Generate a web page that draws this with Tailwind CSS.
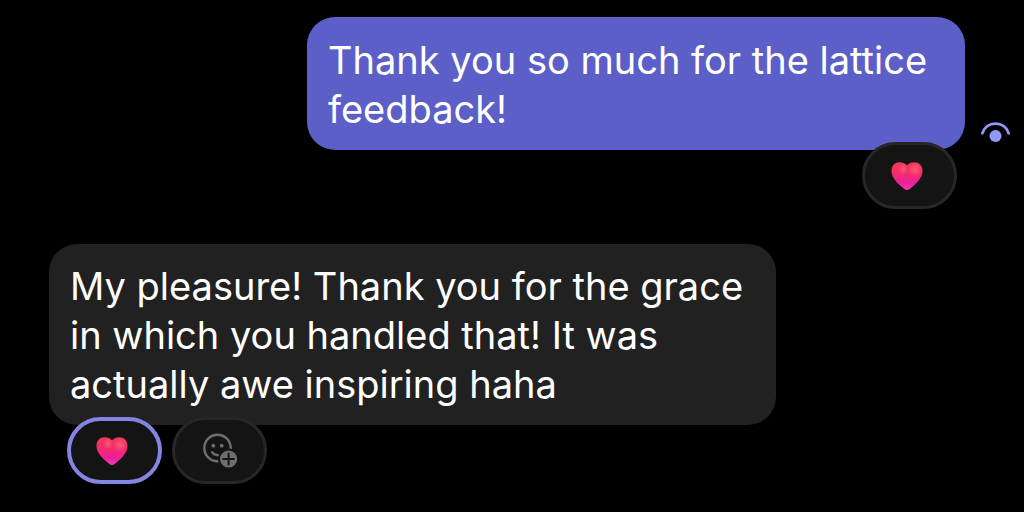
<!DOCTYPE html>
<html lang="en">
<head>
    <meta charset="UTF-8">
    <meta name="viewport" content="width=device-width, initial-scale=1.0">
    <title>Chat</title>
    <script src="https://cdn.jsdelivr.net/npm/@tailwindcss/browser@4"></script>
</head>
<body class="bg-black min-h-screen font-['Inter',sans-serif] text-white text-[38px] leading-[49px]">
    <svg class="absolute size-0" aria-hidden="true">
        <defs>
            <linearGradient id="heart-base" x1="0" y1="0" x2="0" y2="1">
                <stop offset="0" stop-color="#f23a58"></stop>
                <stop offset="0.4" stop-color="#f52c6c"></stop>
                <stop offset="0.75" stop-color="#ea1f9c"></stop>
                <stop offset="1" stop-color="#ee3fae"></stop>
            </linearGradient>
            <radialGradient id="heart-shine" cx="0.5" cy="0.5" r="0.5">
                <stop offset="0" stop-color="#ff8a84" stop-opacity="0.5"></stop>
                <stop offset="1" stop-color="#ff7a80" stop-opacity="0"></stop>
            </radialGradient>
            <symbol id="heart" viewBox="0 0 32 28">
                <path fill="url(#heart-base)" d="M16 3.6C14 1.2 11.6 .2 8.8 .2C4 .2 .5 3.6 .5 8.8C.5 16.4 7.4 22.2 13.6 27.2C15.2 28.3 16.8 28.3 18.4 27.2C24.6 22.2 31.5 16.4 31.5 8.8C31.5 3.6 28 .2 23.2 .2C20.4 .2 18 1.2 16 3.6Z"></path>
                <ellipse cx="12" cy="7" rx="5" ry="6" fill="url(#heart-shine)"></ellipse>
                <ellipse cx="24" cy="8" rx="7" ry="7" fill="url(#heart-shine)"></ellipse>
            </symbol>
        </defs>
    </svg>

    <main class="pt-[17px] pl-[49px] pr-[14px]">
        <!-- Sent message -->
        <article class="flex justify-end items-start gap-4">
            <div class="flex flex-col items-end">
                <p class="bg-[#5c5fc7] rounded-[28px] pl-[21px] pr-[30px] pt-[19px] pb-4 max-w-[658px]">Thank you so much for the lattice feedback!</p>
                <button type="button" aria-label="Heart reaction" class="relative -mt-2 mr-2 w-[95px] h-[67px] rounded-full bg-[#141414] border-3 border-[#272727] flex items-center justify-center">
                    <svg class="w-8 h-7 -ml-1.5"><use href="#heart"></use></svg>
                </button>
            </div>
            <svg class="w-[29px] h-5 mt-[105px] shrink-0" viewBox="0 0 29 20" fill="none" role="img" aria-label="Seen">
                <path d="M1.4 11.2C3.2 5.4 8.3 1.6 14.5 1.6S25.8 5.4 27.6 11.2" stroke="#9299f7" stroke-width="2.8" stroke-linecap="round"></path>
                <circle cx="14.5" cy="14" r="6" fill="#9299f7"></circle>
            </svg>
        </article>

        <!-- Received message -->
        <article class="flex flex-col items-start mt-[35px]">
            <p class="bg-[#212121] rounded-[28px] pl-[21px] pr-[30px] pt-[18px] pb-4 max-w-[727px]">My pleasure! Thank you for the grace in which you handled that! It was actually awe inspiring haha</p>
            <div class="relative flex gap-[10px] -mt-2 ml-[18px]">
                <button type="button" aria-label="Heart reaction" aria-pressed="true" class="w-[95px] h-[67px] rounded-full bg-[#141414] border-4 border-[#8385e0] flex items-center justify-center">
                    <svg class="w-8 h-7 -ml-1.5"><use href="#heart"></use></svg>
                </button>
                <button type="button" aria-label="Add reaction" class="w-[95px] h-[67px] rounded-full bg-[#141414] border-3 border-[#272727] flex items-center justify-center">
                    <svg class="size-9" viewBox="0 0 36 36" fill="none">
                        <circle cx="15.5" cy="15" r="13.2" stroke="#6e6e6e" stroke-width="2.4"></circle>
                        <circle cx="11.3" cy="12.7" r="1.9" fill="#6e6e6e"></circle>
                        <circle cx="19.7" cy="12.7" r="1.9" fill="#6e6e6e"></circle>
                        <path d="M10 19.2C11.4 21.3 13.4 22.3 16.4 22.2" stroke="#6e6e6e" stroke-width="2.4" stroke-linecap="round"></path>
                        <circle cx="26.6" cy="26" r="10.6" fill="#141414"></circle>
                        <circle cx="26.6" cy="26" r="8.6" fill="#6e6e6e"></circle>
                        <path d="M26.6 20.6V31.4M21.2 26H32" stroke="#141414" stroke-width="2" stroke-linecap="round"></path>
                    </svg>
                </button>
            </div>
        </article>
    </main>
</body>
</html>
